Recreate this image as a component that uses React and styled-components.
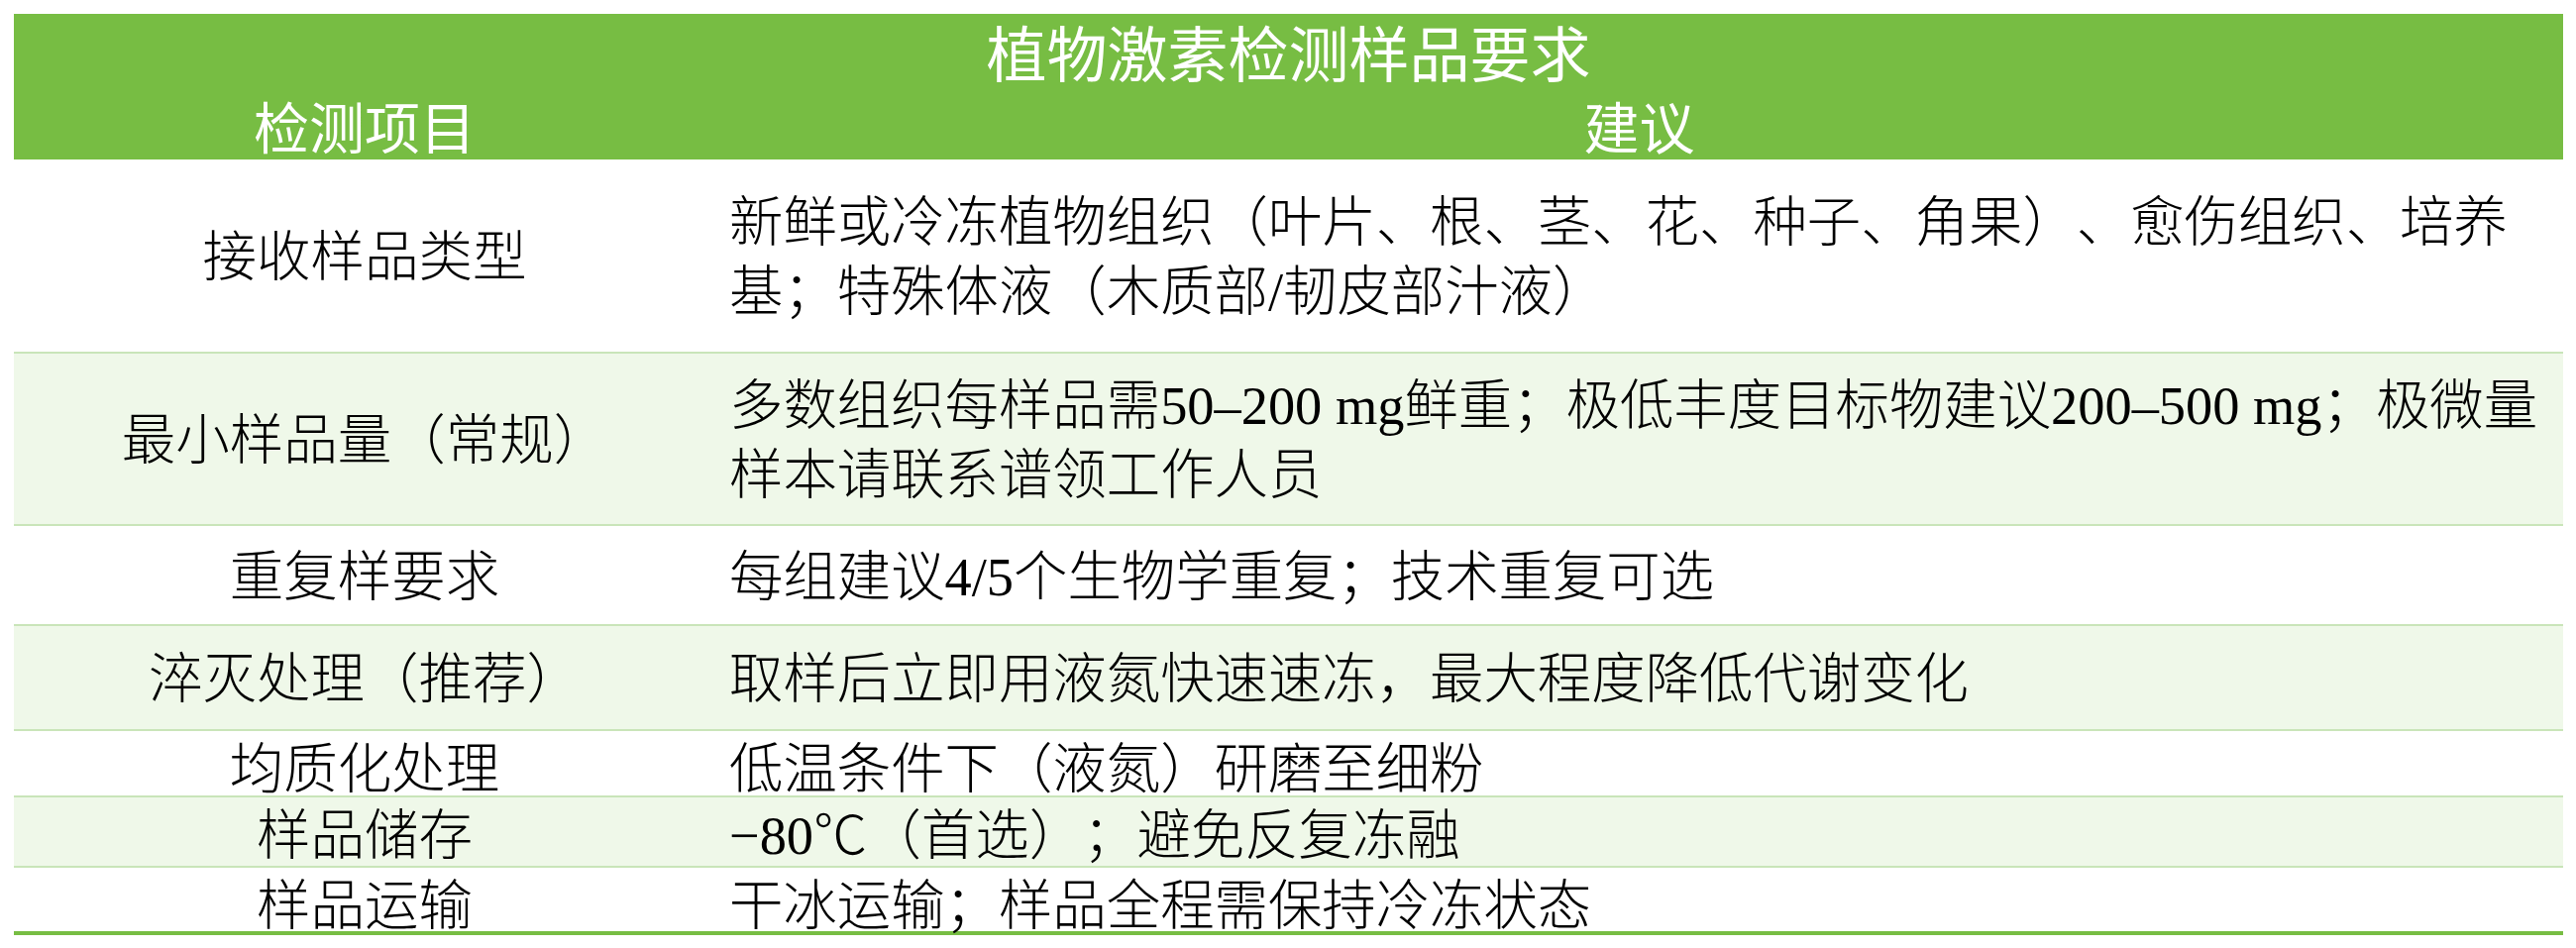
import React from 'react';
import styled, { createGlobalStyle } from 'styled-components';

const GlobalStyle = createGlobalStyle`
  html, body {
    margin: 0;
    padding: 0;
    background: #ffffff;
  }
  body {
    font-family: "Liberation Serif", "Noto Sans CJK SC", serif;
    color: #000000;
    text-spacing-trim: space-all;
  }
`;

const Page = styled.div`
  width: 2600px;
  height: 957px;
  box-sizing: border-box;
  padding: 14px 13px 0 14px;
`;

const Table = styled.div`
  width: 2573px;
  border-bottom: 4px solid #77bd43;
`;

const Header = styled.div`
  background: #77bd43;
  color: #ffffff;
`;

const Title = styled.div`
  height: 81px;
  box-sizing: border-box;
  padding-top: 6px;
  display: flex;
  align-items: center;
  justify-content: center;
  font-size: 61px;
  line-height: 70px;
  font-weight: 400;
`;

const HeadRow = styled.div`
  display: grid;
  grid-template-columns: 708px 1fr;
  height: 66px;
`;

const HeadCell = styled.div`
  display: flex;
  align-items: center;
  justify-content: center;
  padding-top: 6px;
  font-size: 56px;
  line-height: 60px;
  font-weight: 400;
`;

const Row = styled.div`
  display: grid;
  grid-template-columns: 708px 1fr;
  box-sizing: border-box;
  height: ${props => props.$h}px;
  background: ${props => (props.$shade ? '#eff8e9' : '#ffffff')};
  border-top: ${props => (props.$first ? 'none' : '2px solid #c9e5b9')};
`;

const Label = styled.div`
  display: flex;
  align-items: center;
  justify-content: center;
  padding-top: 4px;
  font-size: 54.5px;
  line-height: 70px;
  font-weight: 300;
  white-space: nowrap;
`;

const Detail = styled.div`
  display: flex;
  flex-direction: column;
  justify-content: center;
  padding: 4px 0 0 14px;
  font-size: 54.4px;
  line-height: 70px;
  font-weight: 300;
  white-space: nowrap;
`;

const Line = styled.span`
  display: block;
`;

const rows = [
  {
    label: '接收样品类型',
    lines: [
      '新鲜或冷冻植物组织（叶片、根、茎、花、种子、角果）、愈伤组织、培养',
      '基；特殊体液（木质部/韧皮部汁液）',
    ],
    h: 194,
  },
  {
    label: '最小样品量（常规）',
    lines: [
      '多数组织每样品需50–200 mg鲜重；极低丰度目标物建议200–500 mg；极微量',
      '样本请联系谱领工作人员',
    ],
    h: 174,
    shade: true,
  },
  { label: '重复样要求', lines: ['每组建议4/5个生物学重复；技术重复可选'], h: 101 },
  { label: '淬灭处理（推荐）', lines: ['取样后立即用液氮快速速冻，最大程度降低代谢变化'], h: 106, shade: true },
  { label: '均质化处理', lines: ['低温条件下（液氮）研磨至细粉'], h: 67 },
  { label: '样品储存', lines: ['−80℃（首选）；避免反复冻融'], h: 71, shade: true },
  { label: '样品运输', lines: ['干冰运输；样品全程需保持冷冻状态'], h: 66 },
];

export default function App() {
  return (
    <Page>
      <GlobalStyle />
      <Table>
        <Header>
          <Title>植物激素检测样品要求</Title>
          <HeadRow>
            <HeadCell>检测项目</HeadCell>
            <HeadCell>建议</HeadCell>
          </HeadRow>
        </Header>
        {rows.map((row, i) => (
          <Row key={row.label} $h={row.h} $shade={row.shade} $first={i === 0}>
            <Label>{row.label}</Label>
            <Detail>
              {row.lines.map(line => (
                <Line key={line}>{line}</Line>
              ))}
            </Detail>
          </Row>
        ))}
      </Table>
    </Page>
  );
}
